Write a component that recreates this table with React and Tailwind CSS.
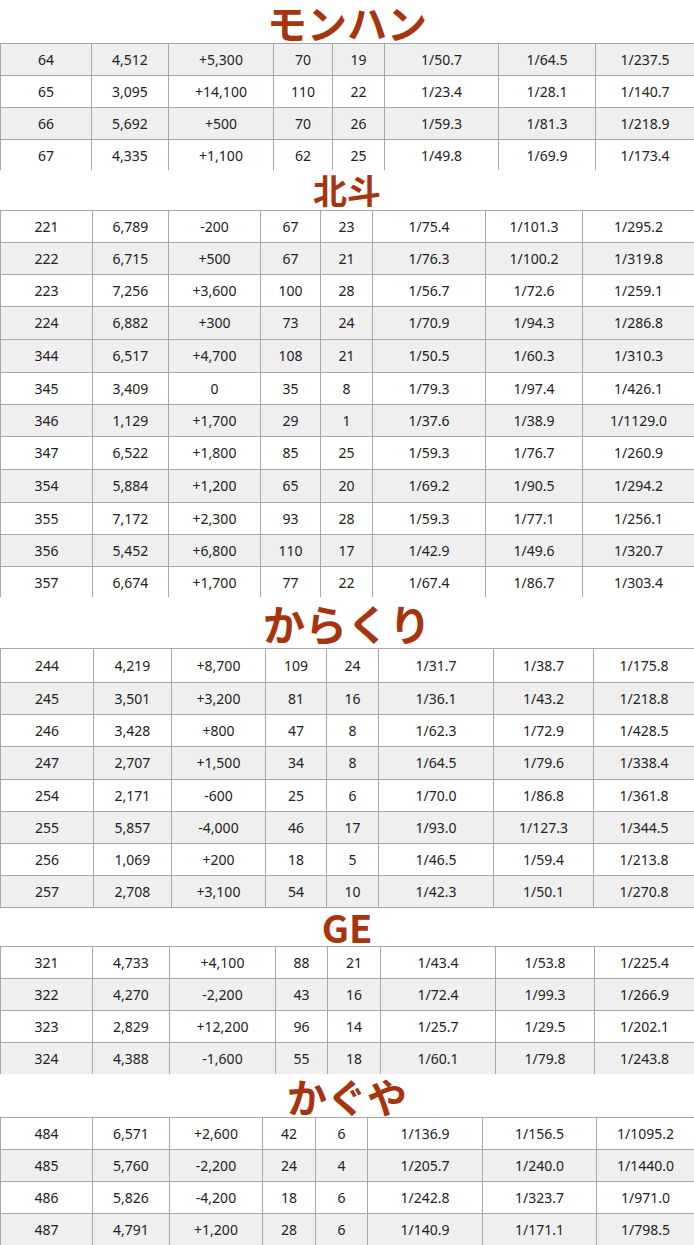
import React from "react";

const sections = [
  {
    title: "モンハン",
    headH: "h-[43px]",
    titleCls: "text-[40px] leading-[40px]",
    wrapH: "h-[127px]",
    cols: [91, 77, 105, 59, 52, 114, 97, 99],
    rows: [
      ["64", "4,512", "+5,300", "70", "19", "1/50.7", "1/64.5", "1/237.5"],
      ["65", "3,095", "+14,100", "110", "22", "1/23.4", "1/28.1", "1/140.7"],
      ["66", "5,692", "+500", "70", "26", "1/59.3", "1/81.3", "1/218.9"],
      ["67", "4,335", "+1,100", "62", "25", "1/49.8", "1/69.9", "1/173.4"],
    ],
    stripe: [1, 0, 1, 0],
    heights: [32, 32, 32, 32],
  },
  {
    title: "北斗",
    headH: "h-[40px]",
    titleCls: "text-[34px] leading-[36px]",
    wrapH: "h-[387px]",
    cols: [92, 76, 92, 60, 52, 113, 97, 112],
    rows: [
      ["221", "6,789", "-200", "67", "23", "1/75.4", "1/101.3", "1/295.2"],
      ["222", "6,715", "+500", "67", "21", "1/76.3", "1/100.2", "1/319.8"],
      ["223", "7,256", "+3,600", "100", "28", "1/56.7", "1/72.6", "1/259.1"],
      ["224", "6,882", "+300", "73", "24", "1/70.9", "1/94.3", "1/286.8"],
      ["344", "6,517", "+4,700", "108", "21", "1/50.5", "1/60.3", "1/310.3"],
      ["345", "3,409", "0", "35", "8", "1/79.3", "1/97.4", "1/426.1"],
      ["346", "1,129", "+1,700", "29", "1", "1/37.6", "1/38.9", "1/1129.0"],
      ["347", "6,522", "+1,800", "85", "25", "1/59.3", "1/76.7", "1/260.9"],
      ["354", "5,884", "+1,200", "65", "20", "1/69.2", "1/90.5", "1/294.2"],
      ["355", "7,172", "+2,300", "93", "28", "1/59.3", "1/77.1", "1/256.1"],
      ["356", "5,452", "+6,800", "110", "17", "1/42.9", "1/49.6", "1/320.7"],
      ["357", "6,674", "+1,700", "77", "22", "1/67.4", "1/86.7", "1/303.4"],
    ],
    stripe: [0, 1, 0, 1, 1, 0, 1, 0, 1, 0, 1, 0],
    heights: [32, 32, 32, 33, 33, 32, 32, 33, 33, 32, 32, 32],
  },
  {
    title: "からくり",
    headH: "h-[51px]",
    titleCls: "text-[42px] leading-[44px]",
    wrapH: "h-[260px]",
    cols: [93, 78, 94, 61, 52, 115, 100, 101],
    rows: [
      ["244", "4,219", "+8,700", "109", "24", "1/31.7", "1/38.7", "1/175.8"],
      ["245", "3,501", "+3,200", "81", "16", "1/36.1", "1/43.2", "1/218.8"],
      ["246", "3,428", "+800", "47", "8", "1/62.3", "1/72.9", "1/428.5"],
      ["247", "2,707", "+1,500", "34", "8", "1/64.5", "1/79.6", "1/338.4"],
      ["254", "2,171", "-600", "25", "6", "1/70.0", "1/86.8", "1/361.8"],
      ["255", "5,857", "-4,000", "46", "17", "1/93.0", "1/127.3", "1/344.5"],
      ["256", "1,069", "+200", "18", "5", "1/46.5", "1/59.4", "1/213.8"],
      ["257", "2,708", "+3,100", "54", "10", "1/42.3", "1/50.1", "1/270.8"],
    ],
    stripe: [0, 1, 0, 1, 0, 1, 0, 1],
    heights: [34, 32, 32, 33, 32, 32, 32, 32],
  },
  {
    title: "GE",
    headH: "h-[38px]",
    titleCls: "text-[38px] leading-[36px]",
    wrapH: "h-[128px]",
    cols: [92, 77, 106, 52, 53, 115, 99, 100],
    rows: [
      ["321", "4,733", "+4,100", "88", "21", "1/43.4", "1/53.8", "1/225.4"],
      ["322", "4,270", "-2,200", "43", "16", "1/72.4", "1/99.3", "1/266.9"],
      ["323", "2,829", "+12,200", "96", "14", "1/25.7", "1/29.5", "1/202.1"],
      ["324", "4,388", "-1,600", "55", "18", "1/60.1", "1/79.8", "1/243.8"],
    ],
    stripe: [0, 1, 0, 1],
    heights: [32, 32, 32, 32],
  },
  {
    title: "かぐや",
    headH: "h-[43px]",
    titleCls: "text-[40px] leading-[40px]",
    wrapH: "h-[128px]",
    cols: [92, 77, 93, 53, 52, 115, 114, 98],
    rows: [
      ["484", "6,571", "+2,600", "42", "6", "1/136.9", "1/156.5", "1/1095.2"],
      ["485", "5,760", "-2,200", "24", "4", "1/205.7", "1/240.0", "1/1440.0"],
      ["486", "5,826", "-4,200", "18", "6", "1/242.8", "1/323.7", "1/971.0"],
      ["487", "4,791", "+1,200", "28", "6", "1/140.9", "1/171.1", "1/798.5"],
    ],
    stripe: [0, 1, 0, 1],
    heights: [32, 32, 32, 32],
  },
];

function DataTable({ s }) {
  return (
    <div className={`${s.wrapH} overflow-hidden`}>
      <table className="w-[694px] table-fixed border-collapse text-[14px] text-[#222]">
        <colgroup>
          {s.cols.map((w, i) => (
            <col key={i} style={{ width: w }} />
          ))}
        </colgroup>
        <tbody>
          {s.rows.map((r, i) => (
            <tr
              key={r[0]}
              className={s.stripe[i] ? "bg-[#efefef]" : "bg-white"}
              style={{ height: s.heights[i] }}
            >
              {r.map((c, j) => (
                <td
                  key={j}
                  className="border border-[#a8a8a8] p-0 text-center align-middle leading-none"
                >
                  {c}
                </td>
              ))}
            </tr>
          ))}
        </tbody>
      </table>
    </div>
  );
}

export default function App() {
  return (
    <div className="w-[694px] h-[1245px] overflow-hidden bg-white font-['Noto_Sans','Noto_Sans_CJK_JP',sans-serif]">
      {sections.map((s) => (
        <div key={s.title}>
          <div className={`${s.headH} flex items-center justify-center`}>
            <h2
              className={`${s.titleCls} font-bold text-[#a5340f] font-['Noto_Sans_CJK_JP','Noto_Sans',sans-serif]`}
            >
              {s.title}
            </h2>
          </div>
          <DataTable s={s} />
        </div>
      ))}
    </div>
  );
}
